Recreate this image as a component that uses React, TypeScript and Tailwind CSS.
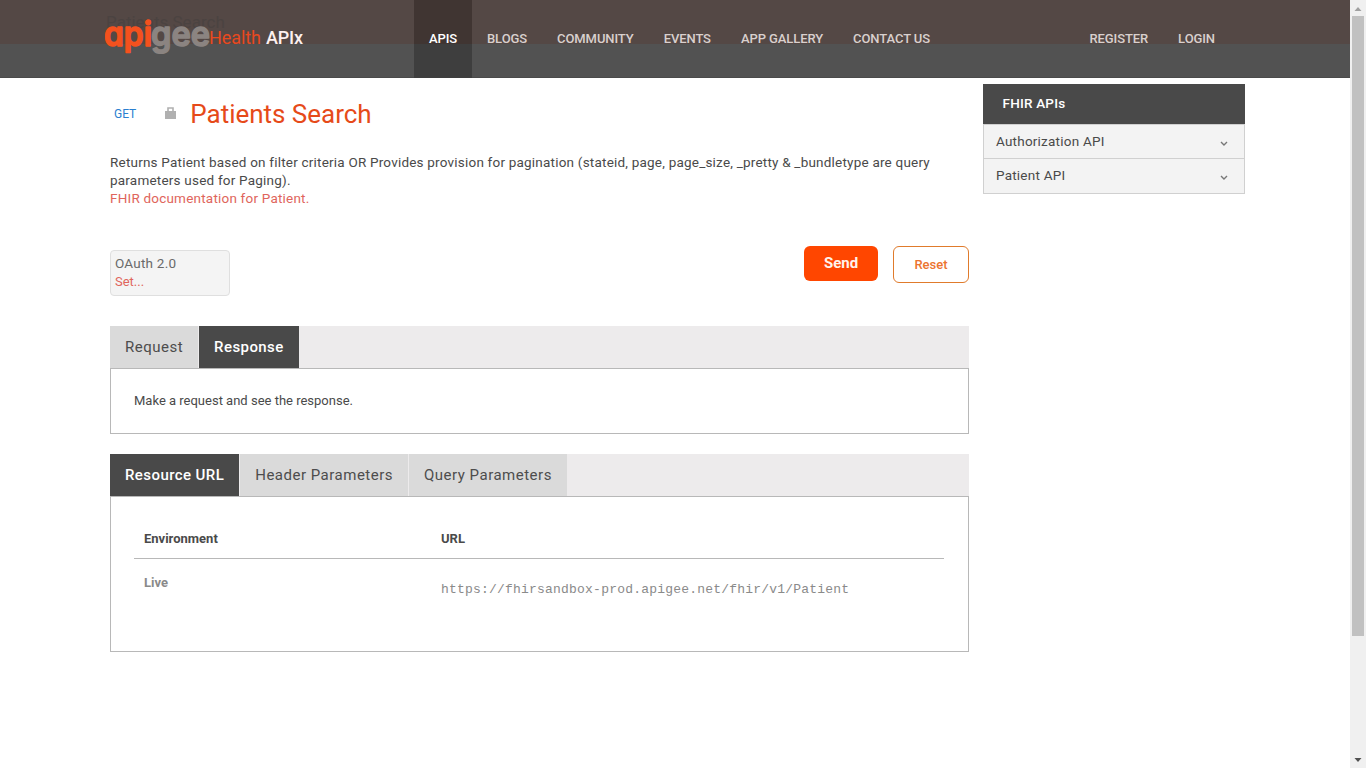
import React from "react";

const navItems = ["APIS", "BLOGS", "COMMUNITY", "EVENTS", "APP GALLERY", "CONTACT US"];

function Logo() {
  return (
    <a className="relative block h-[78px] w-[309px] shrink-0">
      <span className="absolute left-[1px] top-[7px] whitespace-nowrap text-[17px] font-normal leading-[30px] tracking-normal text-[#4b4341]">
        Patients Search
      </span>
      <svg className="absolute left-0 top-0 tracking-normal" width="205" height="78" viewBox="0 0 205 78">
        <g
          fontFamily="Inter"
          fontWeight="600"
          fontSize="34"
          strokeWidth="1.5"
          strokeLinejoin="round"
          style={{ fontFeatureSettings: '"cv11"' }}
        >
          <text x="-1" y="45.500" textLength="48" lengthAdjust="spacingAndGlyphs" fill="#f4511e" stroke="#f4511e">
            api
          </text>
          <text x="46" y="45.500" textLength="59" lengthAdjust="spacingAndGlyphs" fill="#8b8481" stroke="#8b8481">
            gee
          </text>
        </g>
        <g fontFamily="Roboto" fontSize="18">
          <text x="104" y="44" textLength="52" fontWeight="400" fill="#e8491f">Health</text>
          <text x="161" y="44" textLength="37" fontWeight="500" fill="#fdf1ef">APIx</text>
        </g>
      </svg>
    </a>
  );
}

function Header() {
  return (
    <header className="flex h-[78px] border-b border-[#4a4a4a] bg-[linear-gradient(#544845_44px,#525252_44px)] pl-[105px] text-[13px] font-medium leading-[78px] tracking-[-0.09px] text-[#d9d0ce]">
      <Logo />
      <nav className="flex">
        {navItems.map((t, i) => (
          <a
            key={t}
            className={
              i === 0
                ? "h-[78px] w-[58px] bg-[linear-gradient(#403532_44px,#3e3e3e_44px)] text-center text-white"
                : "px-[15px]"
            }
          >
            {t}
          </a>
        ))}
      </nav>
      <nav className="ml-auto flex gap-[30px] pr-[135px]">
        <a>REGISTER</a>
        <a>LOGIN</a>
      </nav>
    </header>
  );
}

function Tabs({ items, active }: { items: string[]; active: number }) {
  return (
    <div className="flex h-[42px] gap-px bg-[#edebec] text-[15px] leading-[42px] tracking-[0.5px]">
      {items.map((t, i) => (
        <div
          key={t}
          className={
            i === active
              ? "bg-[#494949] px-[15px] font-medium tracking-[0.42px] text-white"
              : "bg-[#dadada] px-[15px] text-[#4d4d4d]"
          }
        >
          {t}
        </div>
      ))}
    </div>
  );
}

function Lock() {
  return (
    <svg width="11" height="12" viewBox="0 0 11 12" className="ml-[29px] mt-[23px]">
      <path d="M0 4h11v8H0z" fill="#b0b0b0" />
      <path d="M3 4.5V1h5v3.5" fill="none" stroke="#b0b0b0" strokeWidth="1.6" />
    </svg>
  );
}

function SideItem({ label }: { label: string }) {
  return (
    <div className="flex h-[34px] justify-between border-b border-[#d0d0d0] pl-[12px] pr-[16px] text-[13.5px] leading-[33px] tracking-[0.22px] last:h-[35px]">
      <span>{label}</span>
      <svg width="8" height="6" viewBox="0 0 8 6" className="mt-[16px]">
        <path d="M1 1l3 3 3-3" fill="none" stroke="#777" strokeWidth="1.4" />
      </svg>
    </div>
  );
}

function Scrollbar() {
  return (
    <div className="flex w-4 shrink-0 flex-col items-center justify-between bg-[#f0f0f0]">
      <div className="flex h-[636px] w-full flex-col items-center">
        <svg width="16" height="16" viewBox="0 0 16 16" className="shrink-0">
          <path d="M4.5 11L8 7l3.500 4z" fill="#a0a0a0" />
        </svg>
        <div className="h-[620px] w-[12px] bg-[#c1c1c1]" />
      </div>
      <svg width="16" height="16" viewBox="0 0 16 16">
        <path d="M4.500 6h7L8 10z" fill="#505050" />
      </svg>
    </div>
  );
}

export default function App() {
  return (
    <div className="flex h-[768px] w-[1366px] overflow-hidden bg-white font-['Roboto',sans-serif] text-[#4a4a4a]">
      <div className="w-[1350px]">
        <Header />
        <div className="flex gap-[14px] pl-[110px]">
          <main className="w-[859px]">
            <div className="flex h-[75px] pt-[6px]">
              <span className="ml-[4px] mt-[22px] text-[12px] leading-4 text-[#2a7fd0]">GET</span>
              <Lock />
              <h1 className="ml-[14px] mt-[14px] text-[26px] leading-[32px] tracking-[-0.02px] text-[#e64a19]">Patients Search</h1>
            </div>
            <p className="h-[97px] whitespace-nowrap text-[13.5px] leading-[18px] tracking-[0.208px] text-[#4a4a4a]">
              Returns Patient based on filter criteria OR Provides provision for pagination (stateid, page, page_size, _pretty &amp; _bundletype are query
              <br />
              parameters used for Paging).
              <br />
              <a className="text-[#e0655c]">FHIR documentation for Patient.</a>
            </p>
            <div className="-mt-[4px] flex h-[76px] items-start">
              <div className="mt-[4px] h-[46px] w-[120px] rounded-[4px] border border-[#dfdfdf] bg-[#f4f4f4] pl-[4px] pt-[3px] text-[13.5px] leading-[18px] tracking-[0.22px] text-[#6a6a6a]">
                OAuth 2.0
                <div className="pt-px text-[13px] tracking-normal text-[#e0655c]">Set...</div>
              </div>
              <button className="ml-auto h-[35px] w-[74px] rounded-[6px] bg-[#ff4600] text-[15px] font-bold text-[#fff3ec]">Send</button>
              <button className="ml-[15px] h-[37px] w-[76px] rounded-[6px] border border-[#e07b2c] text-[13px] font-medium text-[#ec7430]">Reset</button>
            </div>
            <div className="mt-[4px]">
              <Tabs items={["Request", "Response"]} active={1} />
              <div className="h-[66px] border border-[#b8b8b8] pl-[23px] text-[13px] leading-[63px]">
                Make a request and see the response.
              </div>
            </div>
            <div className="mt-[20px]">
              <Tabs items={["Resource URL", "Header Parameters", "Query Parameters"]} active={0} />
              <div className="h-[156px] border border-[#b8b8b8] pl-[23px] pr-[24px] pt-[21px] text-[13px] font-bold">
                <div className="grid h-[41px] grid-cols-[297px_1fr] border-b border-[#b8b8b8] pl-[10px] leading-[41px]">
                  <span>Environment</span>
                  <span>URL</span>
                </div>
                <div className="grid grid-cols-[297px_1fr] pl-[10px] text-[#8a8a8a]">
                  <span className="leading-[48px]">Live</span>
                  <span className="font-['Liberation_Mono',monospace] text-[13px] font-normal leading-[62px] tracking-[0.205px]">
                    https://fhirsandbox-prod.apigee.net/fhir/v1/Patient
                  </span>
                </div>
              </div>
            </div>
          </main>
          <aside className="mt-[6px] w-[262px]">
            <div className="h-[40px] bg-[#494949] pl-[19.5px] text-[13.5px] font-medium leading-[38px] tracking-[0.2px] text-white">FHIR APIs</div>
            <div className="border border-b-0 border-[#d0d0d0] bg-[#f3f3f3]">
              <SideItem label="Authorization API" />
              <SideItem label="Patient API" />
            </div>
          </aside>
        </div>
      </div>
      <Scrollbar />
    </div>
  );
}
